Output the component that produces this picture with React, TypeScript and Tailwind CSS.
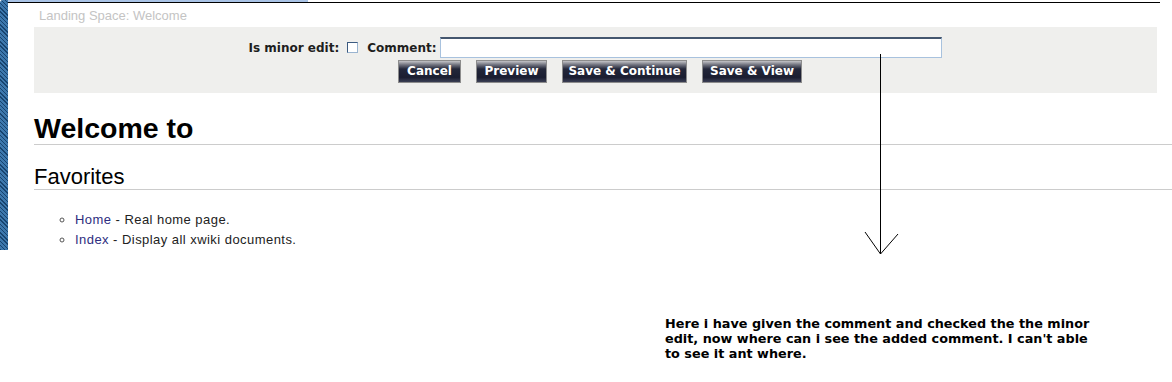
import React from "react";

const btn =
  "h-[23px] border border-[#8c8c8c] bg-[linear-gradient(#c4c4c8_0%,#70727e_18%,#23273a_38%,#1b1e31_78%,#3b3f55_100%)] text-white text-[12px] font-bold leading-[21px] text-center font-['DejaVu_Sans',sans-serif]";

export default function App() {
  return (
    <div className="relative w-[1172px] h-[382px] overflow-hidden bg-white font-['Liberation_Sans',Arial,sans-serif]">
      <div className="flex h-[250px]">
        <div className="w-[8px] h-[250px] rounded-tl-[3px] bg-[repeating-linear-gradient(45deg,#17446f_0px,#17446f_1px,#3d78ad_1px,#3d78ad_3px)]" />
        <div className="flex-1 flex flex-col">
          <div className="h-[2px] w-[300px] bg-[#a9c3e6]" />
          <div className="h-[1px] w-[1152px] bg-black" />
          <div className="h-[24px] pt-[5px] pl-[31px] text-[13px] leading-[15px] text-[#c4c4c4]">
            Landing Space: Welcome
          </div>
          <div className="ml-[26px] mr-[15px] h-[66px] bg-[#efefed] pt-[10px] flex flex-col items-center">
            <div className="flex items-center h-[21px] font-['DejaVu_Sans',sans-serif] text-[12px] font-bold text-[#1e1e1e]">
              <span>Is minor edit:</span>
              <span className="ml-[8px] w-[11px] h-[11px] bg-white border border-[#3b5a80] border-r-[#9ab4d0] border-b-[#9ab4d0]" />
              <span className="ml-[9px]">Comment:</span>
              <span className="ml-[4px] w-[502px] h-[21px] bg-white border border-[#a8c2de] border-t-2 border-t-[#44566e]" />
            </div>
            <div className="mt-[2px] flex gap-[15px] pl-[9px]">
              <div className={`${btn} w-[63px]`}>Cancel</div>
              <div className={`${btn} w-[71px]`}>Preview</div>
              <div className={`${btn} w-[125px]`}>Save &amp; Continue</div>
              <div className={`${btn} w-[100px]`}>Save &amp; View</div>
            </div>
          </div>
          <h1 className="ml-[26px] mt-[19px] text-[28.5px] leading-[32px] font-bold text-black border-b border-[#cccccc]">
            Welcome to
          </h1>
          <h2 className="ml-[26px] mt-[20px] text-[22px] leading-[24px] text-black border-b border-[#cccccc]">
            Favorites
          </h2>
          <ul className="ml-[67px] mt-[20px] list-[circle] pl-0 text-[13px] leading-[20px] tracking-[0.45px] text-[#222] marker:text-[#555]">
            <li>
              <span className="text-[#2e2e80]">Home</span> - Real home page.
            </li>
            <li>
              <span className="text-[#2e2e80]">Index</span> - Display all xwiki documents.
            </li>
          </ul>
        </div>
      </div>
      <div className="ml-[665px] mt-[66px] w-[440px] font-['DejaVu_Sans',sans-serif] font-bold text-[12.8px] leading-[15px] text-black">
        Here i have given the comment and checked the the minor edit, now where can i see the added comment. I can't able to see it ant where.
      </div>
      <svg className="absolute left-0 top-0" width="1172" height="382" viewBox="0 0 1172 382" fill="none">
        <path d="M880.5 54 V254" stroke="#000" strokeWidth="1" />
        <path d="M865 232 L880.5 254 L898 234" stroke="#000" strokeWidth="1" />
      </svg>
    </div>
  );
}
